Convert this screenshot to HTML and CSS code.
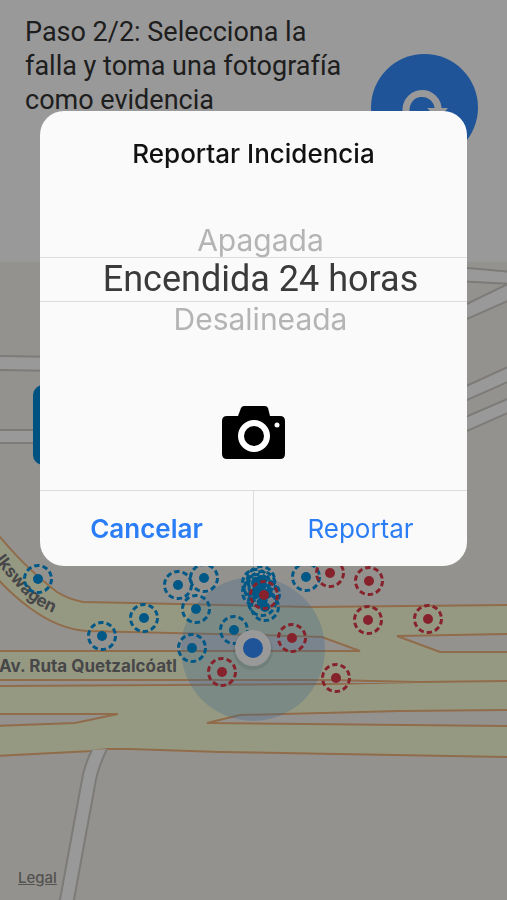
FILE: index.html
```html
<!DOCTYPE html>
<html lang="es">
<head>
    <meta charset="UTF-8">
    <meta name="viewport" content="width=device-width, initial-scale=1.0">
    <title>Reportar Incidencia</title>
    <link rel="stylesheet" href="styles.css">
</head>
<body>
    <div class="screen">
        <header class="header">
            <p class="step">Paso 2/2: Selecciona la falla y toma una fotografía como evidencia</p>
            <button type="button" class="btn-refresh" aria-label="Actualizar">
                <svg viewBox="0 0 107 107" aria-hidden="true">
                    <path d="M67 57 A16 16 0 1 0 61 68" fill="none" stroke="#fff" stroke-width="7"/>
                    <path d="M56 54 H77 L67 65 Z" fill="#fff"/>
                </svg>
            </button>
        </header>

        <main class="map">
            <svg class="map-canvas" viewBox="0 262 507 638" preserveAspectRatio="xMidYMin slice" role="img" aria-label="Mapa de luminarias">
                <defs>
                    <g id="lamp">
                        <circle r="13.5" fill="none" stroke="currentColor" stroke-width="3" stroke-dasharray="5.4 3.08"/>
                        <circle r="5" fill="currentColor"/>
                    </g>
                    <path id="street" d="M-5 560 C4 572 12 582 24 594 S44 609 70 620"/>
                </defs>

                <!-- local streets -->
                <g class="street">
                    <path d="M-5 356 L240 360 V374 L-5 370 Z"/>
                    <path d="M-5 430 H240 V443 H-5 Z"/>
                    <path d="M400 262 L512 272 V284 L400 278 Z"/>
                    <path d="M440 317 L512 282 V299 L440 331 Z"/>
                    <path d="M440 398 L512 365 V380 L440 412 Z"/>
                    <path d="M440 428 L512 397 V411 L440 443 Z"/>
                </g>

                <!-- avenues -->
                <g class="avenue">
                    <path d="M-5 531 C15 555 30 571 57 592 Q68 599 83 602 L133 603 L310 607 L512 605 V757 L220 752 L130 749 H107 L92 751 L-5 756 Z"/>
                </g>
                <g class="median">
                    <path d="M-5 576 Q12 595 30 608 Q58 629 87 631 L260 635 L322 637 L360 651 L-5 651 Z"/>
                    <path d="M397 636 L512 634 V652 H440 Z"/>
                    <path d="M-5 680 L330 680 L417 682 L330 684 L-5 686 Z"/>
                    <path d="M-5 714 H118 L75 723 L-5 726 Z"/>
                    <path d="M207 723 L240 715 L400 711 L512 710 V726 Z"/>
                    <path d="M417 682 L512 681"/>
                </g>
                <g class="street">
                    <path d="M92 750 Q84 765 81 785 L59 905 H73 L95 785 Q97 770 107 749"/>
                </g>

                <rect x="33" y="385" width="90" height="80" rx="10" fill="#0089d6"/>

                <text class="street-name"><textPath href="#street">lkswagen</textPath></text>
                <text class="street-name" x="-1" y="672">Av. Ruta Quetzalcóatl</text>

                <circle cx="253" cy="649" r="72" fill="#5aa5e8" fill-opacity=".28"/>

                <g class="lamp-ok">
                    <use href="#lamp" x="38" y="579"/>
                    <use href="#lamp" x="178" y="585"/>
                    <use href="#lamp" x="204" y="578"/>
                    <use href="#lamp" x="196" y="609"/>
                    <use href="#lamp" x="144" y="618"/>
                    <use href="#lamp" x="102" y="636"/>
                    <use href="#lamp" x="192" y="648"/>
                    <use href="#lamp" x="234" y="630"/>
                    <use href="#lamp" x="306" y="577"/>
                    <use href="#lamp" x="256" y="583"/>
                    <use href="#lamp" x="261" y="580"/>
                    <use href="#lamp" x="256" y="592"/>
                    <use href="#lamp" x="258" y="588"/>
                    <use href="#lamp" x="262" y="585"/>
                    <use href="#lamp" x="266" y="594"/>
                    <use href="#lamp" x="262" y="602"/>
                    <use href="#lamp" x="265" y="607"/>
                </g>
                <g class="lamp-fail">
                    <use href="#lamp" x="264" y="595"/>
                    <use href="#lamp" x="330" y="573"/>
                    <use href="#lamp" x="369" y="581"/>
                    <use href="#lamp" x="368" y="620"/>
                    <use href="#lamp" x="428" y="619"/>
                    <use href="#lamp" x="292" y="638"/>
                    <use href="#lamp" x="222" y="672"/>
                    <use href="#lamp" x="336" y="678"/>
                </g>

                <!-- user location -->
                <circle cx="253" cy="650" r="20" fill="#000" fill-opacity=".08"/>
                <circle cx="253" cy="648" r="18" fill="#fff"/>
                <circle cx="253" cy="648" r="10" fill="#348cff"/>
            </svg>
            <a href="#legal" class="legal">Legal</a>
        </main>
    </div>

    <div class="overlay">
        <form class="dialog" role="dialog" aria-labelledby="dialogTitle">
            <h1 id="dialogTitle">Reportar Incidencia</h1>

            <div class="picker" role="radiogroup" aria-labelledby="dialogTitle">
                <input type="radio" name="falla" id="apagada" value="apagada">
                <label for="apagada">Apagada</label>
                <input type="radio" name="falla" id="encendida" value="encendida" checked>
                <label for="encendida">Encendida 24 horas</label>
                <input type="radio" name="falla" id="desalineada" value="desalineada">
                <label for="desalineada">Desalineada</label>
            </div>

            <button type="button" class="btn-camera" aria-label="Tomar fotografía">
                <svg viewBox="0 0 64 54" aria-hidden="true">
                    <path d="M5 11 H16 L19 3 Q20 1 22 1 H43 Q45 1 46 3 L48 11 H58 Q63 11 63 16 V49 Q63 54 58 54 H5 Q0 54 0 49 V16 Q0 11 5 11 Z"/>
                    <circle cx="32" cy="31" r="13" fill="none" stroke="#fff" stroke-width="6"/>
                    <circle cx="55" cy="20" r="2.5" fill="#fff"/>
                </svg>
            </button>

            <div class="actions">
                <button type="button" class="btn btn-cancel">Cancelar</button>
                <button type="submit" class="btn">Reportar</button>
            </div>
        </form>
    </div>
</body>
</html>
```
FILE: styles.css
```css
* {
    box-sizing: border-box;
}
body {
    margin: 0;
    font-family: Inter, Roboto, sans-serif;
    background-color: #fff;
}
button {
    padding: 0;
    border: none;
    background: none;
    font-family: inherit;
    cursor: pointer;
}
.screen {
    display: flex;
    flex-direction: column;
    min-height: 100vh;
}
.header {
    display: flex;
    justify-content: space-between;
    align-items: flex-start;
    gap: 20px;
    min-height: 262px;
    padding: 15px 29px 0 25px;
}
.step {
    margin: 0;
    font-family: Roboto, sans-serif;
    font-size: 27px;
    line-height: 34px;
    color: #333;
}
.btn-refresh {
    flex: none;
    width: 107px;
    height: 107px;
    margin-top: 39px;
    border-radius: 50%;
    background-color: #348cff;
}
.btn-refresh svg {
    display: block;
}

/* map */
.map {
    position: relative;
    display: flex;
    flex: 1;
    background-color: #f7f3ed;
}
.map-canvas {
    flex: 1;
    width: 100%;
}
.street path {
    fill: #fff;
    stroke: #d0cdc8;
    stroke-width: 2;
}
.avenue path {
    fill: #faffd9;
    stroke: #f0b47c;
    stroke-width: 2;
}
.median path {
    fill: #f7f3ef;
    stroke: #f0b47c;
    stroke-width: 2;
}
.street-name {
    font-size: 17px;
    font-weight: 700;
    fill: #77777a;
}
.lamp-ok {
    color: #0093e0;
}
.lamp-fail {
    color: #e03a48;
}
.legal {
    position: absolute;
    left: 18px;
    bottom: 12px;
    font-size: 15px;
    line-height: 20px;
    font-weight: 500;
    color: #8a8a86;
}

/* dialog */
.overlay {
    position: fixed;
    inset: 0;
    padding: 111px 40px 0;
    background-color: rgba(0,0,0,0.4);
}
.dialog {
    display: flex;
    flex-direction: column;
    align-items: center;
    border-radius: 24px;
    overflow: hidden;
    background-color: #fafafa;
}
h1 {
    margin: 27px 0 53px;
    font-size: 26px;
    line-height: 32px;
    font-weight: 500;
    color: #111;
}
.picker {
    width: 100%;
    text-align: center;
}
.picker input {
    position: absolute;
    opacity: 0;
    pointer-events: none;
}
.picker label {
    display: block;
    padding-left: 14px;
    font-size: 30px;
    line-height: 34px;
    color: #b4b4b4;
}
.picker input:checked + label {
    border-top: 1px solid #dcdcdc;
    border-bottom: 1px solid #dcdcdc;
    font-family: Roboto, sans-serif;
    font-size: 36px;
    line-height: 43px;
    color: #3a3a3a;
}
.btn-camera {
    width: 64px;
    height: 54px;
    margin: 69px 0 31px;
}
.btn-camera svg {
    display: block;
}
.actions {
    display: flex;
    width: 100%;
    border-top: 1px solid #dcdcdc;
}
.btn {
    flex: 1;
    height: 75px;
    font-size: 26px;
    color: #2a7df5;
}
.btn-cancel {
    border-right: 1px solid #dcdcdc;
    font-weight: 600;
}
```
